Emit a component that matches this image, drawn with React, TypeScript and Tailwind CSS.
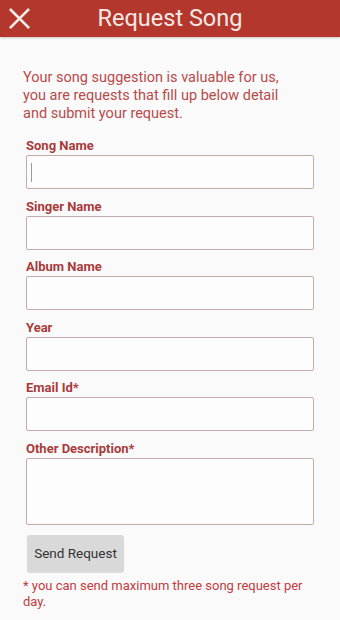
const fields = [
  { label: "Song Name", caret: true },
  { label: "Singer Name" },
  { label: "Album Name" },
  { label: "Year" },
  { label: "Email Id*" },
];

function Field({ label, caret, tall }: { label: string; caret?: boolean; tall?: boolean }) {
  return (
    <div className="flex flex-col">
      <div className="text-[13px] font-bold leading-[16px] text-[#a93b3b]">{label}</div>
      <div
        className={`mt-px flex items-center rounded-[2px] border-[1.5px] border-[#c6abab] bg-[#fdfdfd] ${
          tall ? "h-[67px]" : "h-[34px]"
        }`}
      >
        {caret && <span className="ml-[4px] h-[19px] w-px bg-[#9a9a9a]" />}
      </div>
    </div>
  );
}

export default function App() {
  return (
    <div className="h-[620px] w-[340px] overflow-hidden bg-[#fafafa] font-['Roboto',sans-serif]">
      <header className="relative flex h-[37px] items-center justify-center bg-[#b3372c] shadow-[0_1px_2px_rgba(0,0,0,0.2)]">
        <svg
          className="absolute left-[8px] top-[7px] h-[23px] w-[23px]"
          viewBox="0 0 24 24"
          fill="none"
          stroke="#f6ecea"
          strokeWidth="2.8"
          strokeLinecap="square"
        >
          <path d="M3 3L21 21M21 3L3 21" />
        </svg>
        <h1 className="text-[23.5px] leading-none text-[#f6e7e4]">Request Song</h1>
      </header>

      <main className="px-[23px] pt-[32px]">
        <p className="text-[14.5px] leading-[18px] text-[#b84a4a]">
          Your song suggestion is valuable for us,
          <br />
          you are requests that fill up below detail
          <br />
          and submit your request.
        </p>

        <div className="mt-[15px] flex flex-col gap-[9.6px] px-[3px]">
          {fields.map((f) => (
            <Field key={f.label} label={f.label} caret={f.caret} />
          ))}
          <Field label="Other Description*" tall />
        </div>

        <div className="mt-[10px] px-[4px]">
          <button className="flex h-[37px] w-[97px] items-center justify-center rounded-[3px] bg-[#d9d9d9] text-[13.5px] text-[#333] shadow-[0_1px_1px_rgba(0,0,0,0.12)]">
            Send Request
          </button>
        </div>

        <p className="mt-[6px] text-[13px] leading-[16px] text-[#c33a3f]">
          * you can send maximum three song request per day.
        </p>
      </main>
    </div>
  );
}
